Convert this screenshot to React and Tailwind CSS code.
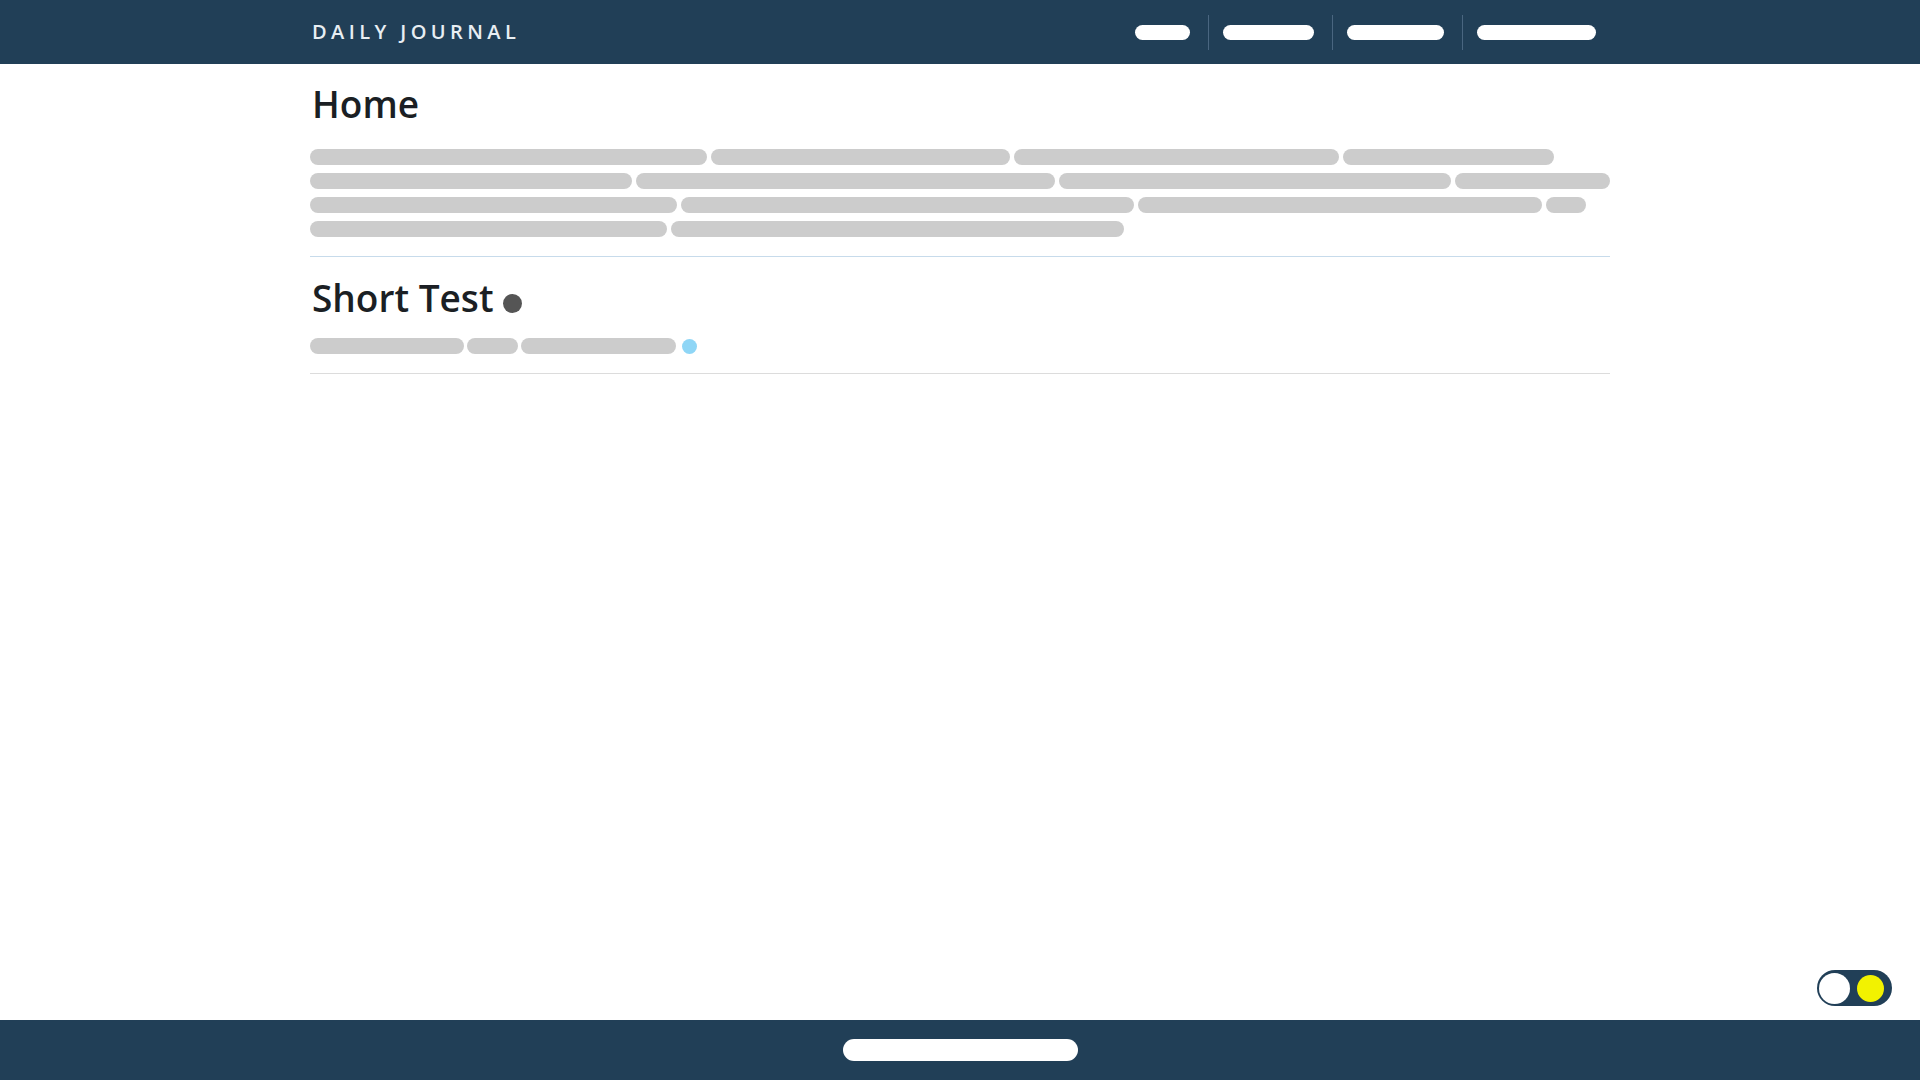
const navPills = [55, 91, 97, 119];

const homeRows = [
  [397, 299, 325, 211],
  [322, 419, 392, 155],
  [367, 453, 404, 40],
  [357, 453],
];

const shortRow = [154, 51, 155];

const Bar = ({ width }) => (
  <span className="block h-4 rounded-full bg-[#cccccc]" style={{ width }} />
);

const App = () => {
  return (
    <div className="flex min-h-screen flex-col bg-white font-['Open_Sans',sans-serif] text-[#1b1f24]">
      <header className="h-16 bg-[#213f57]">
        <div className="mx-auto flex h-full w-[1300px] items-center justify-between">
          <span className="pl-[2px] text-[20px] font-semibold tracking-[0.22em] text-[#e8eef3]">
            DAILY JOURNAL
          </span>
          <nav className="flex items-center">
            {navPills.map((w, i) => (
              <div key={i} className="flex items-center">
                {i > 0 && <span className="ml-[4px] block h-[35px] w-px bg-[#4a6680]" />}
                <span className="px-[14px]">
                  <span className="block h-[15px] rounded-full bg-white" style={{ width: w }} />
                </span>
              </div>
            ))}
          </nav>
        </div>
      </header>

      <main className="flex-1">
        <div className="mx-auto w-[1300px]">
          {/* Home */}
          <section className="border-b border-[#c7dbeb] pb-[15px]">
            <h1 className="mt-[12px] pl-[2px] text-[37px] font-semibold">Home</h1>
            <div className="mt-[13px] flex flex-col">
              {homeRows.map((row, r) => (
                <div key={r} className="flex h-6 items-center gap-[4px]">
                  {row.map((w, i) => (
                    <Bar key={i} width={w} />
                  ))}
                </div>
              ))}
            </div>
          </section>

          {/* Short Test */}
          <section className="border-b border-[#dcdcdc] pb-[15px]">
            <h2 className="mt-[13px] flex items-end pl-[2px] text-[37px] font-semibold">
              Short Test
              <span className="mb-[12px] ml-[9px] block h-[19px] w-[19px] rounded-full bg-[#555555]" />
            </h2>
            <div className="mt-[9px] flex h-6 items-center gap-[3px]">
              {shortRow.map((w, i) => (
                <Bar key={i} width={w} />
              ))}
              <span className="ml-[3px] block h-[15px] w-[15px] rounded-full bg-[#8fd6f6]" />
            </div>
          </section>
        </div>
      </main>

      <footer className="flex h-[60px] items-center justify-center bg-[#213f57]">
        <span className="block h-[22px] w-[235px] rounded-full bg-white" />
      </footer>

      {/* theme toggle */}
      <button className="fixed bottom-[74px] right-[28px] flex h-[36px] w-[75px] items-center rounded-full bg-[#213f57] pl-[2px] pr-[8px]">
        <span className="block h-[31px] w-[31px] rounded-full bg-white" />
        <span className="ml-[7px] block h-[27px] w-[27px] rounded-full bg-[#f2f200]" />
      </button>
    </div>
  );
};

export default App;
